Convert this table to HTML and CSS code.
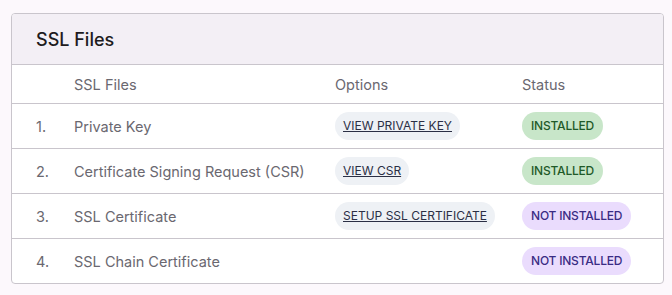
FILE: index.html
```html
<!DOCTYPE html>
<html lang="en">
<head>
    <meta charset="UTF-8">
    <title>SSL Files</title>
    <link rel="stylesheet" href="styles.css">
</head>
<body>
    <div class="card">
        <div class="card-header">
            <h2>SSL Files</h2>
        </div>
        <table>
            <colgroup>
                <col class="col-num">
                <col class="col-name">
                <col class="col-options">
                <col class="col-status">
            </colgroup>
            <thead>
                <tr>
                    <th></th>
                    <th>SSL Files</th>
                    <th>Options</th>
                    <th>Status</th>
                </tr>
            </thead>
            <tbody>
                <tr>
                    <td>1.</td>
                    <td>Private Key</td>
                    <td><a href="#" class="option-btn">View Private Key</a></td>
                    <td><span class="status installed">Installed</span></td>
                </tr>
                <tr>
                    <td>2.</td>
                    <td>Certificate Signing Request (CSR)</td>
                    <td><a href="#" class="option-btn">View CSR</a></td>
                    <td><span class="status installed">Installed</span></td>
                </tr>
                <tr>
                    <td>3.</td>
                    <td>SSL Certificate</td>
                    <td><a href="#" class="option-btn">Setup SSL Certificate</a></td>
                    <td><span class="status missing">Not Installed</span></td>
                </tr>
                <tr>
                    <td>4.</td>
                    <td>SSL Chain Certificate</td>
                    <td></td>
                    <td><span class="status missing">Not Installed</span></td>
                </tr>
            </tbody>
        </table>
    </div>
</body>
</html>
```

FILE: styles.css
```css
body {
    margin: 0;
    padding: 13px 8px 0 11px;
    background-color: #fcf8fc;
    font-family: Inter, 'Noto Sans', sans-serif;
}

.card {
    width: 651px;
    background-color: white;
    border: 1px solid #c9c5cc;
    border-radius: 4px;
    overflow: hidden;
}

.card-header {
    background-color: #f3eff5;
    height: 50px;
    padding-left: 24px;
    display: flex;
    align-items: center;
    border-bottom: 1px solid #c9c5cc;
}

.card-header h2 {
    margin: 0;
    font-size: 18px;
    font-weight: 500;
    color: #1d1b20;
}

table {
    width: 100%;
    border-collapse: collapse;
    table-layout: fixed;
}

.col-num { width: 50px; }
.col-name { width: 261px; }
.col-options { width: 187px; }
.col-status { width: auto; }

th, td {
    padding: 0 12px;
    text-align: left;
    font-size: 14.5px;
    font-weight: 400;
    color: #6a6870;
    white-space: nowrap;
}

th:first-child, td:first-child {
    padding-left: 24px;
}

th {
    height: 38px;
}

td {
    height: 44px;
    border-top: 1px solid #c9c5cc;
}

.option-btn {
    display: inline-block;
    padding: 6px 8px;
    border-radius: 14px;
    background-color: #eef1f5;
    color: #2b2f45;
    font-size: 12px;
    line-height: 16px;
    text-transform: uppercase;
}

.status {
    display: inline-block;
    padding: 6px 9px;
    border-radius: 14px;
    font-size: 12px;
    font-weight: 500;
    line-height: 16px;
    letter-spacing: -0.2px;
    text-transform: uppercase;
}

.installed {
    background-color: #c8e6c9;
    color: #1f5a28;
}

.missing {
    background-color: #eadcfd;
    color: #3a2c84;
}
```
